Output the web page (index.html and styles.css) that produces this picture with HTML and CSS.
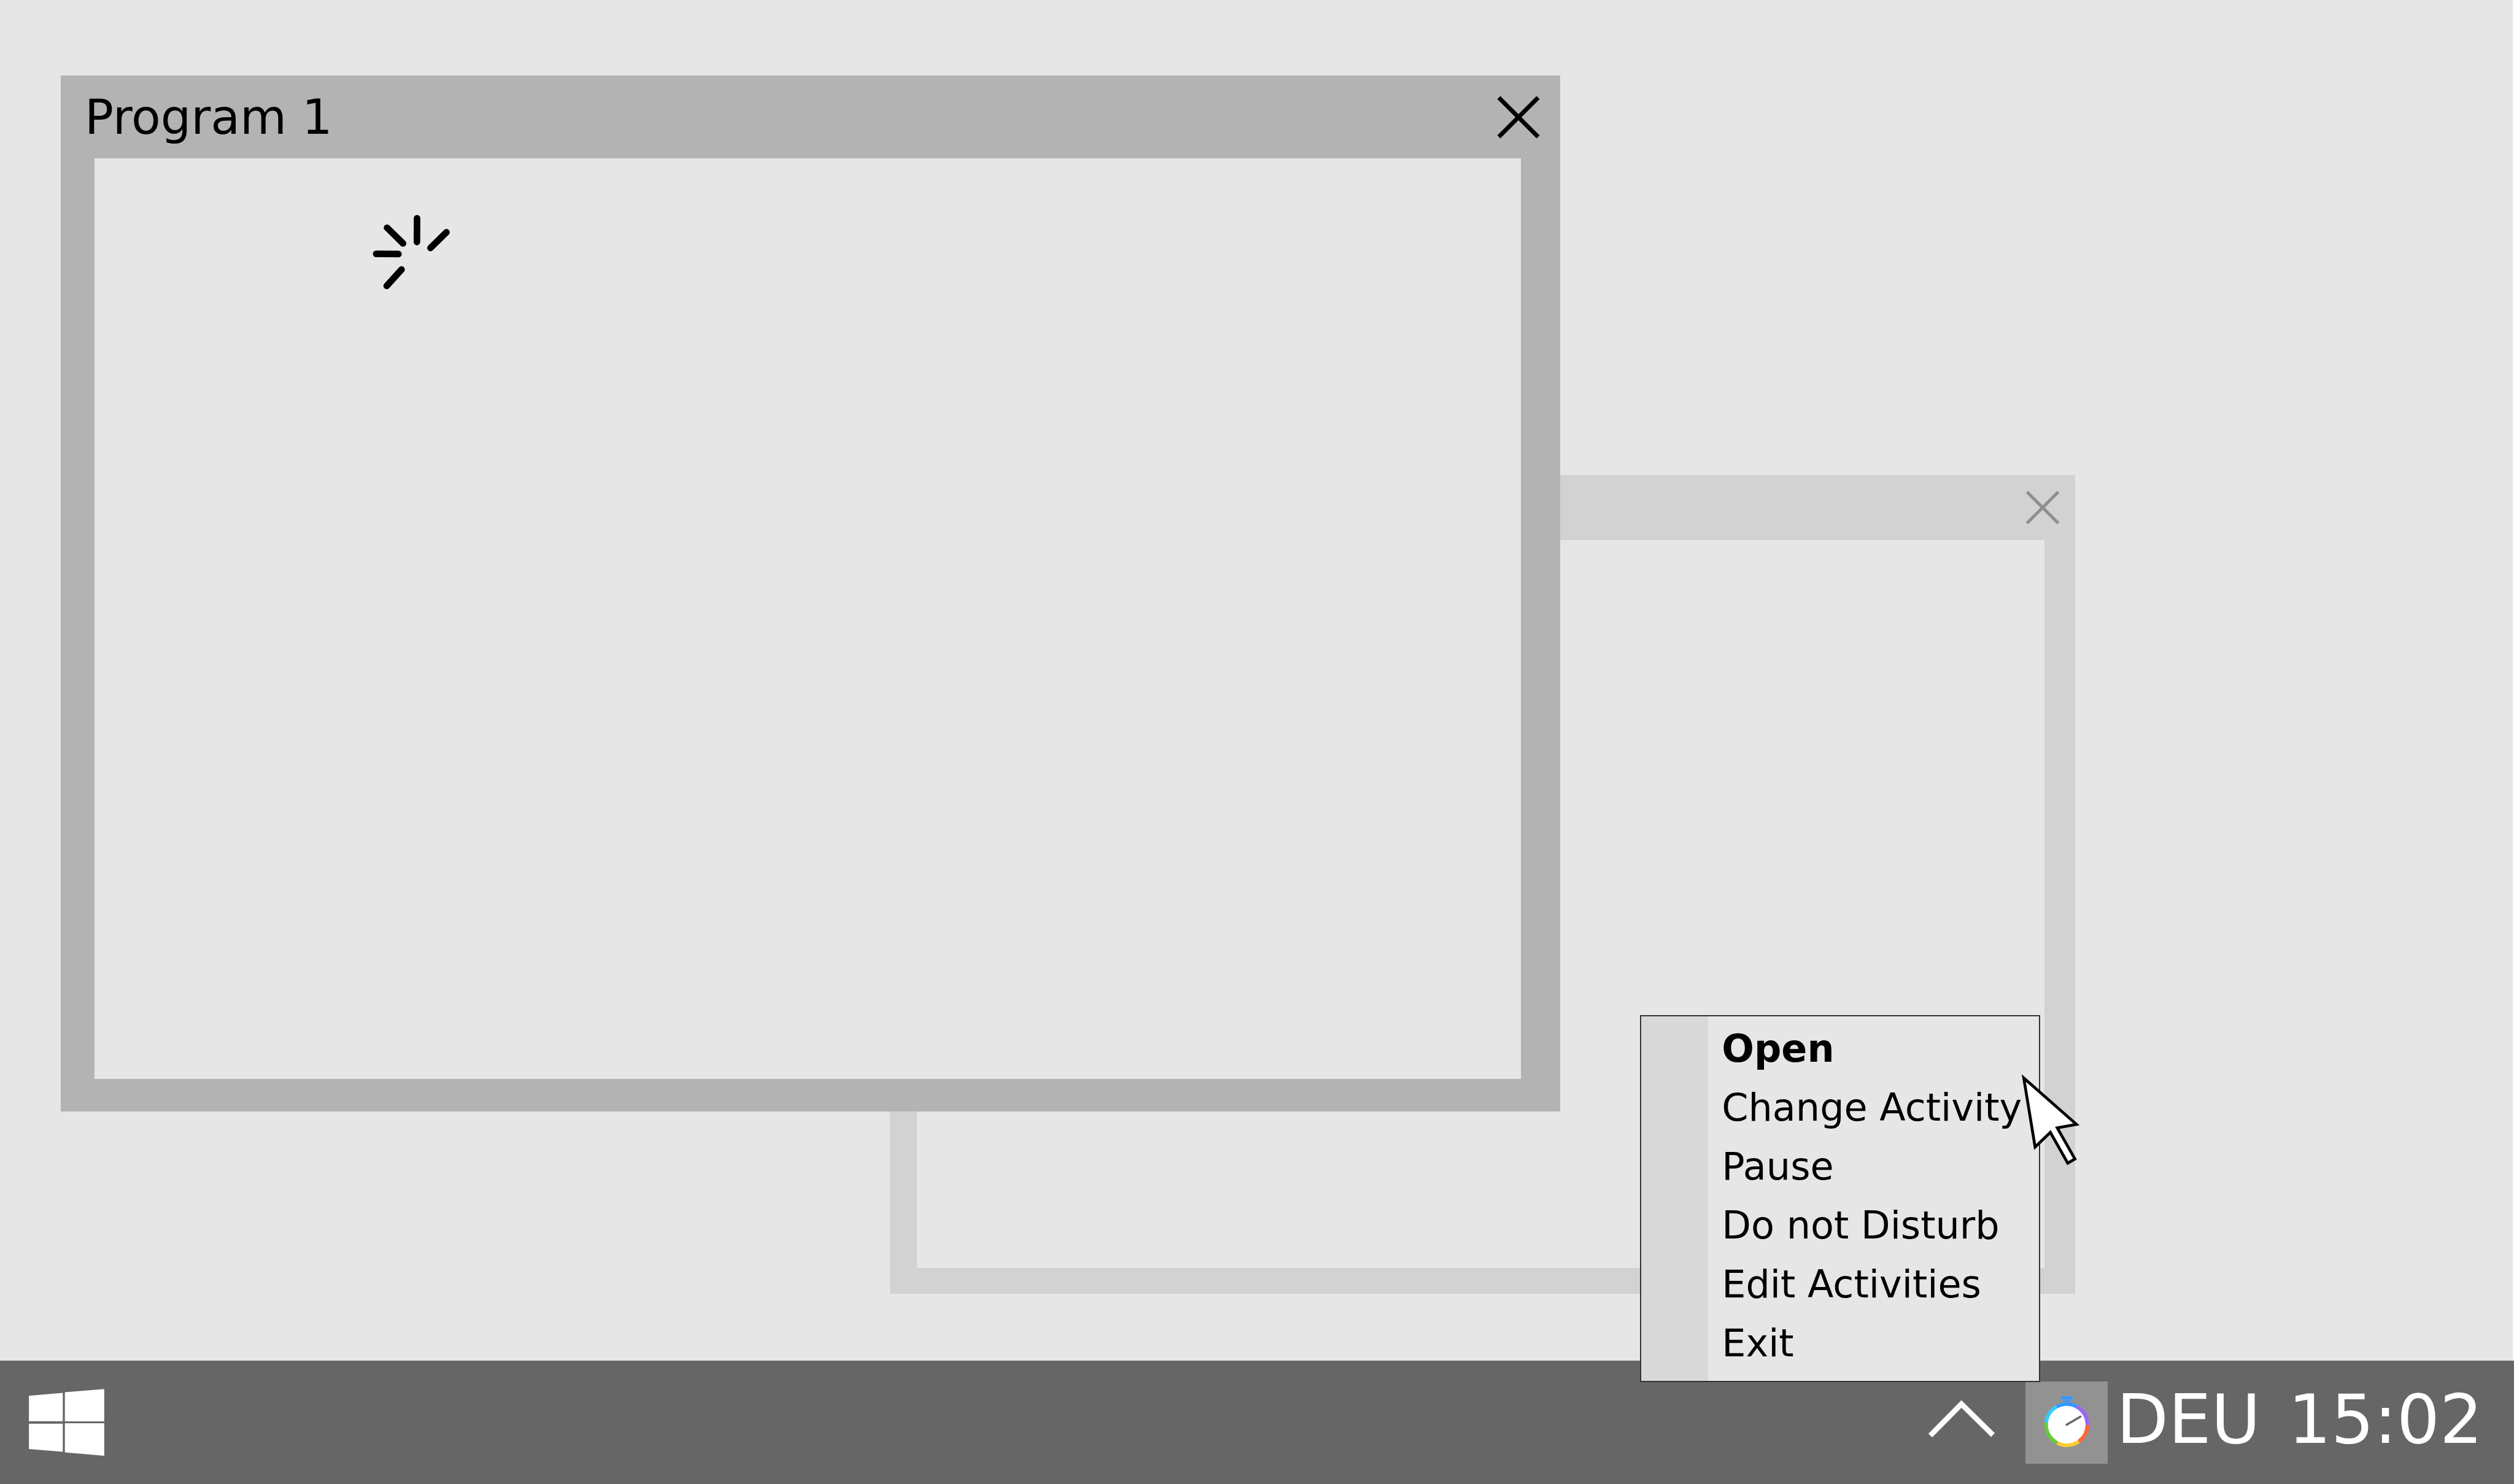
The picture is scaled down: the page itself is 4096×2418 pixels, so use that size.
FILE: index.html
```html
<!DOCTYPE html>
<html lang="en">
<head>
  <meta charset="utf-8">
  <title>Desktop</title>
  <link rel="stylesheet" href="styles.css">
</head>
<body>
  <main class="desktop">
    <section class="window window-back">
      <header class="titlebar">
        <button class="close" type="button" aria-label="Close">
          <svg viewBox="0 0 60 60" aria-hidden="true"><path d="M4.500 4.500 55.500 55.500M55.500 4.500 4.500 55.500"/></svg>
        </button>
      </header>
      <div class="window-body"></div>
    </section>

    <section class="window window-front">
      <header class="titlebar">
        <h1 class="title">Program 1</h1>
        <button class="close" type="button" aria-label="Close">
          <svg viewBox="0 0 72 72" aria-hidden="true"><path d="M4 4 68 68M68 4 4 68"/></svg>
        </button>
      </header>
      <div class="window-body">
        <svg class="spinner" viewBox="640 360 160 160" role="img" aria-label="Loading">
          <path d="M727.500 380 727.300 421.500M779 404.500 751 432M675 396.500 703 424M656 442.300 695 442.600M700.400 469.700 674.400 498.300"/>
        </svg>
      </div>
    </section>
  </main>

  <footer class="taskbar">
    <button class="start" type="button" aria-label="Start">
      <svg viewBox="150 225 394 350" aria-hidden="true">
        <path d="M150 261 327 246V394H150ZM338 243 544 226V395H338ZM150 407H327V554L150 540ZM338 405H544V575L338 557Z"/>
      </svg>
    </button>

    <button class="overflow" type="button" aria-label="Show hidden icons">
      <svg viewBox="128 91 360 431" aria-hidden="true"><path d="M144 374 307 209 472 371"/></svg>
    </button>

    <div class="tray-item">
      <button class="tray-button" type="button" aria-label="Activity timer">
        <svg viewBox="640 91 432 431" aria-hidden="true">
          <circle cx="857" cy="317" r="102" fill="#fff"/>
          <g fill="none" stroke-width="19">
            <path stroke="#3399ff" d="M804 223A108 108 0 0 1 908 222"/>
            <path stroke="#9966ff" d="M908 222A108 108 0 0 1 965 319"/>
            <path stroke="#ff6633" d="M965 319A108 108 0 0 1 920 405"/>
            <path stroke="#ffcc33" d="M920 405A108 108 0 0 1 807 413"/>
            <path stroke="#66cc33" d="M807 413A108 108 0 0 1 749 306"/>
            <path stroke="#33ccff" d="M749 306A108 108 0 0 1 804 223"/>
          </g>
          <rect x="826" y="168" width="62" height="18" rx="5" fill="#3399ff"/>
          <path d="M836 197Q838 188 848 188H866Q877 188 880 197Q857 193 836 197Z" fill="#3399ff"/>
          <path d="M856 318 929 275" stroke="#666" stroke-width="11" stroke-linecap="round"/>
        </svg>
      </button>
      <div class="menu" role="menu">
        <button class="menu-item menu-default" type="button" role="menuitem">Open</button>
        <button class="menu-item" type="button" role="menuitem">Change Activity</button>
        <button class="menu-item" type="button" role="menuitem">Pause</button>
        <button class="menu-item" type="button" role="menuitem">Do not Disturb</button>
        <button class="menu-item" type="button" role="menuitem">Edit Activities</button>
        <button class="menu-item" type="button" role="menuitem">Exit</button>
      </div>
    </div>

    <div class="status">
      <span>DEU</span>
      <time datetime="15:02">15:02</time>
    </div>
  </footer>

  <svg class="cursor" viewBox="680 120 120 170" aria-hidden="true">
    <path d="M691 131 783 212 749.500 218 780.300 272.300 767.800 279.700 737.400 226 710.800 251.500Z"/>
  </svg>
</body>
</html>
```

FILE: styles.css
```css
* {
  box-sizing: border-box;
}

body {
  position: relative;
  display: flex;
  flex-direction: column;
  min-height: 100vh;
  margin: 0;
  background: #e6e6e6;
  color: #000;
  font-family: "DejaVu Sans", Verdana, sans-serif;
}

button {
  margin: 0;
  padding: 0;
  border: 0;
  background: none;
  color: inherit;
  font: inherit;
}

svg {
  display: block;
  width: 100%;
  height: 100%;
}

/* Desktop and its windows */

.desktop {
  position: relative;
  flex: 1;
  border-right: 2px solid #fff;
}

.window {
  position: absolute;
  display: flex;
  flex-direction: column;
}

.window-front {
  top: 123px;
  right: 1552px;
  bottom: 406px;
  left: 99px;
  padding: 0 64px 53px 55px;
  background: #b3b3b3;
}

.window-back {
  top: 774px;
  right: 713px;
  bottom: 109px;
  left: 1450px;
  padding: 0 50px 42px 44px;
  background: #d2d2d2;
}

.titlebar {
  display: flex;
  align-items: center;
  justify-content: space-between;
}

.window-front .titlebar {
  height: 135px;
  margin: 0 -32px 0 -16px;
}

.window-back .titlebar {
  justify-content: flex-end;
  height: 106px;
  margin-right: -27px;
}

.title {
  margin: 0;
  font-size: 78px;
  font-weight: 400;
  line-height: 96px;
}

.close {
  width: 72px;
  height: 72px;
}

.close path {
  fill: none;
  stroke: #000;
  stroke-width: 7;
}

.window-back .close {
  width: 60px;
  height: 60px;
}

.window-back .close path {
  stroke: #8e8e8e;
  stroke-width: 5;
}

.window-body {
  flex: 1;
  padding: 79px 444px;
  background: #e6e6e6;
}

.spinner {
  width: 149px;
  height: 149px;
}

.spinner path {
  fill: none;
  stroke: #000;
  stroke-width: 11.500;
  stroke-linecap: round;
}

/* Taskbar */

.taskbar {
  display: flex;
  align-items: center;
  height: 201px;
  padding: 0 51px 0 47px;
  background: #666;
  color: #fff;
}

.start {
  width: 123px;
  height: 109px;
  margin-right: auto;
}

.start path {
  fill: #fff;
}

.overflow {
  width: 112px;
  height: 134px;
  margin-right: 48px;
}

.overflow path {
  fill: none;
  stroke: #fff;
  stroke-width: 28;
}

.tray-item {
  position: relative;
  margin-right: 14px;
}

.tray-button {
  display: block;
  width: 134px;
  height: 134px;
  background: #929292;
}

.status {
  display: flex;
  gap: 45px;
  padding-bottom: 10px;
  font-size: 110px;
  line-height: 134px;
}

/* Tray menu */

.menu {
  position: absolute;
  right: 110px;
  bottom: 133px;
  display: flex;
  flex-direction: column;
  width: 652px;
  padding: 5px 0 13px;
  border: 2px solid #333;
  background: linear-gradient(to right, #d8d8d8 109px, #e6e6e6 109px);
  color: #000;
}

.menu-item {
  height: 96px;
  padding-left: 131px;
  font-size: 62px;
  line-height: 96px;
  text-align: left;
  white-space: nowrap;
}

.menu-default {
  font-weight: 700;
}

.cursor {
  position: absolute;
  right: 697px;
  bottom: 513px;
  width: 112px;
  height: 159px;
}

.cursor path {
  fill: #fff;
  stroke: #000;
  stroke-width: 5;
}
```
